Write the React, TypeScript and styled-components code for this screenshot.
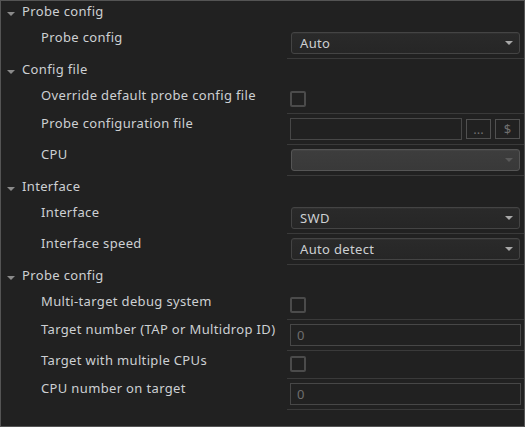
import styled, { createGlobalStyle } from "styled-components";

type Field =
  | { kind: "select"; label: string; value: string; disabled?: boolean }
  | { kind: "check"; label: string }
  | { kind: "text"; label: string; placeholder?: string }
  | { kind: "file"; label: string };

type Group = {
  title: string;
  fields: Field[];
};

const groups: Group[] = [
  {
    title: "Probe config",
    fields: [{ kind: "select", label: "Probe config", value: "Auto" }],
  },
  {
    title: "Config file",
    fields: [
      { kind: "check", label: "Override default probe config file" },
      { kind: "file", label: "Probe configuration file" },
      { kind: "select", label: "CPU", value: "", disabled: true },
    ],
  },
  {
    title: "Interface",
    fields: [
      { kind: "select", label: "Interface", value: "SWD" },
      { kind: "select", label: "Interface speed", value: "Auto detect" },
    ],
  },
  {
    title: "Probe config",
    fields: [
      { kind: "check", label: "Multi-target debug system" },
      { kind: "text", label: "Target number (TAP or Multidrop ID)", placeholder: "0" },
      { kind: "check", label: "Target with multiple CPUs" },
      { kind: "text", label: "CPU number on target", placeholder: "0" },
    ],
  },
];

const GlobalStyle = createGlobalStyle`
  html, body {
    margin: 0;
    padding: 0;
    background: #212121;
  }
  * {
    box-sizing: border-box;
  }
`;

const App: React.FC = () => {
  return (
    <>
      <GlobalStyle />
      <Panel>
        {groups.map((g, i) => (
          <section key={i}>
            <SectionHeader>
              <Caret width="8" height="4" viewBox="0 0 8 4">
                <path d="M0 0h8L4 4z" fill="#8a8a8a" />
              </Caret>
              {g.title}
            </SectionHeader>
            {g.fields.map((f) => (
              <Row key={f.label}>
                <Label>{f.label}</Label>
                <Value>{renderField(f)}</Value>
              </Row>
            ))}
          </section>
        ))}
      </Panel>
    </>
  );
};

const renderField = (f: Field) => {
  switch (f.kind) {
    case "select":
      return (
        <Dropdown $disabled={f.disabled}>
          <span>{f.value}</span>
          <svg width="8" height="4" viewBox="0 0 8 4">
            <path d="M0 0h8L4 4z" fill={f.disabled ? "#595959" : "#a8a8a8"} />
          </svg>
        </Dropdown>
      );
    case "check":
      return <Checkbox />;
    case "text":
      return <TextInput>{f.placeholder}</TextInput>;
    case "file":
      return (
        <FileRow>
          <TextInput />
          <SmallButton>...</SmallButton>
          <SmallButton>$</SmallButton>
        </FileRow>
      );
  }
};

const Panel = styled.div`
  width: 525px;
  height: 427px;
  border: 1px solid #545454;
  background: #212121;
  color: #cdd0d3;
  font-family: "Noto Sans", "DejaVu Sans", sans-serif;
  font-size: 13px;
  letter-spacing: 0.35px;
  overflow: hidden;
`;

const SectionHeader = styled.div`
  display: flex;
  align-items: center;
  gap: 7px;
  height: 27px;
  padding: 0 0 6px 6px;
  line-height: 21px;
`;

const Caret = styled.svg`
  flex: none;
  margin-top: 4px;
`;

const Row = styled.div`
  display: grid;
  grid-template-columns: 286px 1fr;
`;

const Label = styled.div`
  padding: 2px 0 0 40px;
  line-height: 14px;
  white-space: nowrap;
`;

const Value = styled.div`
  padding: 4px 3px;
  border-bottom: 1px solid #3a3a3a;
`;

const Dropdown = styled.div<{ $disabled?: boolean }>`
  display: flex;
  align-items: center;
  justify-content: space-between;
  height: 22px;
  margin: 0 1px;
  padding: 0 6px 0 8px;
  border: 1px solid ${(p) => (p.$disabled ? "#555555" : "#444444")};
  border-radius: 3px;
  background: ${(p) =>
    p.$disabled
      ? "linear-gradient(#3d3d3d, #393939)"
      : "linear-gradient(#2a2a2a, #262626)"};
  box-shadow: inset 0 1px 0 rgba(255, 255, 255, 0.03);
  line-height: 20px;
`;

const Checkbox = styled.div`
  width: 16px;
  height: 16px;
  margin: 1px 0 2px;
  border: 2px solid #4b4b4b;
  border-radius: 2px;
`;

const TextInput = styled.div`
  flex: 1;
  height: 22px;
  padding: 0 6px;
  border: 1px solid #474747;
  background: #212121;
  color: #6e6e6e;
  line-height: 20px;
`;

const FileRow = styled.div`
  display: flex;
  align-items: center;
  gap: 4px;
  padding-right: 1px;
`;

const SmallButton = styled.div`
  flex: none;
  display: flex;
  align-items: center;
  justify-content: center;
  width: 25px;
  height: 20px;
  border: 1px solid #505050;
  color: #6f6f6f;
  line-height: 18px;
  letter-spacing: 0;
`;

export default App;
